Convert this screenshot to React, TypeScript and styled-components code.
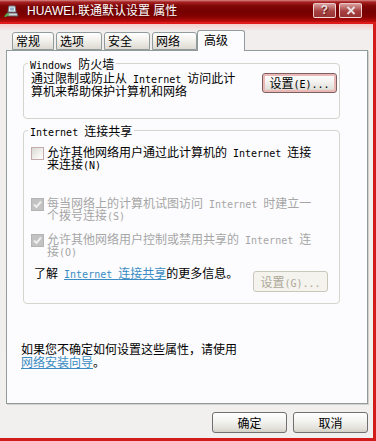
import React from 'react';
import styled, { createGlobalStyle } from 'styled-components';

const GlobalStyle = createGlobalStyle`
    html, body {
        margin: 0;
        padding: 0;
        background: #fff;
    }
    body {
        width: 376px;
        height: 441px;
        overflow: hidden;
    }
`;

const CJK = '"Noto Sans CJK SC", sans-serif';

const Window = styled.div`
    width: 376px;
    height: 441px;
    display: flex;
    flex-direction: column;
    overflow: hidden;
    font-family: ${CJK};
    font-size: 12px;
    color: #000;
`;

const TitleBar = styled.div`
    height: 22px;
    flex: none;
    display: flex;
    align-items: center;
    padding: 0 14px 0 4px;
    box-sizing: border-box;
    background: linear-gradient(
        to bottom,
        #d98a8a 0px,
        #a82222 2px,
        #7e0606 6px,
        #760000 12px,
        #860202 17px,
        #b40a0a 21px,
        #c81010 22px
    );
`;

const TitleText = styled.div`
    flex: 1;
    margin-left: 8px;
    color: #fff;
    font-family: 'Liberation Sans', 'Noto Sans CJK SC', sans-serif;
    font-size: 12px;
    line-height: 14px;
    white-space: nowrap;
    text-shadow: 1px 1px 0 rgba(60, 0, 0, 0.5);
`;

const CaptionButtons = styled.div`
    display: flex;
    gap: 3px;
    align-self: flex-start;
    margin-top: 3px;
`;

const CaptionButton = styled.div`
    width: 23px;
    height: 15px;
    box-sizing: border-box;
    border: 1px solid rgba(255, 235, 235, 0.8);
    border-radius: 2px;
    background: linear-gradient(to bottom, #d89c9c, #a84040 55%, #943434);
    display: flex;
    align-items: center;
    justify-content: center;
    color: #e6dede;
    font-family: 'Liberation Sans', sans-serif;
    font-weight: bold;
    font-size: 12px;
    line-height: 13px;
    text-shadow: 1px 1px 0 #6a2020;
`;

const Body = styled.div`
    flex: 1;
    display: flex;
    flex-direction: column;
    padding: 6px 5px 0 6px;
    border-top: 2px solid #de1a1a;
    border-right: 3px solid #d21c1c;
    border-bottom: 3px solid #d21c1c;
    background: linear-gradient(to bottom, #f6cccc 0px, #f1eeed 7px, #f1f0ef 100%);
`;

const TabStrip = styled.div`
    height: 20px;
    flex: none;
    display: flex;
    align-items: flex-end;
    gap: 2px;
    padding-left: 6px;
`;

const Tab = styled.div<{ $active?: boolean; $width: number }>`
    width: ${p => p.$width}px;
    height: ${p => (p.$active ? 21 : 18)}px;
    box-sizing: border-box;
    border: 1px solid #919b9c;
    border-bottom: ${p => (p.$active ? 'none' : '1px solid #919b9c')};
    border-radius: 3px 3px 0 0;
    padding-left: ${p => (p.$active ? 6 : 3)}px;
    font-size: 12px;
    line-height: ${p => (p.$active ? 18 : 16)}px;
    white-space: nowrap;
    position: relative;
    z-index: ${p => (p.$active ? 1 : 0)};
    margin: ${p => (p.$active ? '0 -2px -1px' : '0')};
    background: ${p =>
        p.$active ? '#fcfcfe' : 'linear-gradient(to bottom, #ffffff, #f2f1ec 45%, #dcdad2)'};
`;

const Panel = styled.div`
    height: 354px;
    flex: none;
    box-sizing: border-box;
    border: 1px solid #919b9c;
    background: #fcfcfe;
    box-shadow: 1px 1px 0 #d2d0c8;
    padding: 6px 27px 0 14px;
    display: flex;
    flex-direction: column;
`;

const GroupBox = styled.fieldset<{ $pad: string; $top?: number }>`
    margin: ${p => p.$top ?? 0}px 0 0 2px;
    padding: ${p => p.$pad};
    border: 1px solid #d6d4cc;
    border-radius: 4px;
    min-width: 0;
`;

const Legend = styled.legend`
    padding: 0 2px;
    margin-left: -3px;
    font-size: 12px;
    line-height: 13px;
    white-space: nowrap;
`;

// SimSun-style half-width latin run; zero line-height so it never grows the line box
const En = styled.span`
    font-family: 'DejaVu Sans Mono', 'Liberation Mono', monospace;
    font-size: 10px;
    line-height: 0;
`;

const FirewallRow = styled.div`
    display: flex;
    justify-content: space-between;
    align-items: flex-start;
`;

const Lines = styled.div<{ $lh: number; $muted?: boolean }>`
    line-height: ${p => p.$lh}px;
    white-space: nowrap;
    color: ${p => (p.$muted ? '#a6a6a6' : '#000')};
`;

const Button = styled.button<{ $variant?: 'plain' | 'focus' | 'disabled'; $h?: number; $mt?: number }>`
    width: 75px;
    height: ${p => p.$h ?? 21}px;
    margin-top: ${p => p.$mt ?? 0}px;
    flex: none;
    padding: 0;
    box-sizing: border-box;
    border-radius: 3px;
    font-family: ${CJK};
    font-size: 12px;
    line-height: 14px;
    cursor: default;
    border: 1px solid
        ${p => (p.$variant === 'disabled' ? '#c9c7ba' : p.$variant === 'focus' ? '#7c6060' : '#707070')};
    color: ${p => (p.$variant === 'disabled' ? '#aca899' : '#000')};
    background: ${p =>
        p.$variant === 'disabled'
            ? '#f4f3ee'
            : 'linear-gradient(to bottom, #ffffff, #f4f4f2 40%, #e4e2dc 80%, #d4d1c8)'};
    box-shadow: ${p => (p.$variant === 'focus' ? 'inset 0 0 0 2px #ebb8b8' : 'none')};
`;

const CheckRow = styled.label<{ $top: number }>`
    display: flex;
    align-items: flex-start;
    gap: 3px;
    margin-top: ${p => p.$top}px;
`;

const Box = styled.span<{ $checked?: boolean }>`
    width: 13px;
    height: 13px;
    margin-top: 1px;
    flex: none;
    box-sizing: border-box;
    display: flex;
    align-items: center;
    justify-content: center;
    border: 1px solid ${p => (p.$checked ? '#b4b4b4' : '#c4aaaa')};
    background: ${p =>
        p.$checked ? '#c2c2c2' : 'linear-gradient(135deg, #dad8d2, #f6f6f4 70%, #ffffff)'};
`;

const InfoRow = styled.div`
    display: flex;
    justify-content: space-between;
    align-items: flex-start;
    margin-top: 10px;
    padding-right: 9px;
`;

const InfoText = styled.div`
    margin-left: 3px;
    line-height: 12px;
    white-space: nowrap;
`;

const Link = styled.span`
    color: #3a8cc2;
    text-decoration: underline;
`;

const Note = styled.div`
    margin-top: 38px;
    line-height: 13px;
    white-space: nowrap;
`;

const Footer = styled.div`
    display: flex;
    justify-content: flex-end;
    gap: 6px;
    margin-top: 8px;
`;

const TitleIcon = () => (
    <svg width="15" height="14" viewBox="0 0 15 14">
        <path d="M5 2 L11 2 L12 8 L4 8 Z" fill="#eef2f4" stroke="#6a7480" strokeWidth="1" />
        <rect x="6" y="3.5" width="4" height="3" fill="#8fb0c8" />
        <path d="M3 9 L13 9 L14 12 L2 12 Z" fill="#d6d8d8" stroke="#5a5f66" strokeWidth="1" />
        <path d="M1 13 Q2 10 5 10.5" fill="none" stroke="#4caa3c" strokeWidth="1.6" />
    </svg>
);

const CheckMark = () => (
    <svg width="9" height="9" viewBox="0 0 9 9">
        <path d="M1 4.5 L3.5 7 L8 1.5" fill="none" stroke="#eeeeee" strokeWidth="2" />
    </svg>
);

const CloseGlyph = () => (
    <svg width="10" height="9" viewBox="0 0 10 9">
        <path d="M1.5 1 L8.5 8 M8.5 1 L1.5 8" stroke="#e8e0e0" strokeWidth="2" />
    </svg>
);

const tabs = [
    { label: '常规', width: 42 },
    { label: '选项', width: 46 },
    { label: '安全', width: 46 },
    { label: '网络', width: 45 },
    { label: '高级', width: 48, active: true }
];

const App = () => {
    return (
        <Window>
            <GlobalStyle />
            <TitleBar>
                <TitleIcon />
                <TitleText>HUAWEI.联通默认设置 属性</TitleText>
                <CaptionButtons>
                    <CaptionButton>?</CaptionButton>
                    <CaptionButton>
                        <CloseGlyph />
                    </CaptionButton>
                </CaptionButtons>
            </TitleBar>
            <Body>
                <TabStrip>
                    {tabs.map(t => (
                        <Tab key={t.label} $width={t.width} $active={t.active}>
                            {t.label}
                        </Tab>
                    ))}
                </TabStrip>
                <Panel>
                    <GroupBox $pad="1px 2px 21px 7px">
                        <Legend>
                            <En>Windows </En>防火墙
                        </Legend>
                        <FirewallRow>
                            <Lines $lh={13}>
                                通过限制或防止从<En> Internet </En>访问此计
                                <br />
                                算机来帮助保护计算机和网络
                            </Lines>
                            <Button $variant="focus" $h={20} $mt={2}>
                                设置<En>(E)...</En>
                            </Button>
                        </FirewallRow>
                    </GroupBox>
                    <GroupBox $pad="0 2px 11px 7px" $top={5}>
                        <Legend>
                            <En>Internet </En>连接共享
                        </Legend>
                        <CheckRow $top={9}>
                            <Box />
                            <Lines $lh={12}>
                                允许其他网络用户通过此计算机的<En> Internet </En>连接
                                <br />
                                来连接<En>(N)</En>
                            </Lines>
                        </CheckRow>
                        <CheckRow $top={27}>
                            <Box $checked>
                                <CheckMark />
                            </Box>
                            <Lines $lh={12} $muted>
                                每当网络上的计算机试图访问<En> Internet </En>时建立一
                                <br />
                                个拨号连接<En>(S)</En>
                            </Lines>
                        </CheckRow>
                        <CheckRow $top={12}>
                            <Box $checked>
                                <CheckMark />
                            </Box>
                            <Lines $lh={12} $muted>
                                允许其他网络用户控制或禁用共享的<En> Internet </En>连
                                <br />
                                接<En>(O)</En>
                            </Lines>
                        </CheckRow>
                        <InfoRow>
                            <InfoText>
                                了解<En> </En>
                                <Link>
                                    <En>Internet </En>连接共享
                                </Link>
                                的更多信息。
                            </InfoText>
                            <Button $variant="disabled" $mt={4}>
                                设置<En>(G)...</En>
                            </Button>
                        </InfoRow>
                    </GroupBox>
                    <Note>
                        如果您不确定如何设置这些属性，请使用
                        <br />
                        <Link>网络安装向导</Link>。
                    </Note>
                </Panel>
                <Footer>
                    <Button>确定</Button>
                    <Button>取消</Button>
                </Footer>
            </Body>
        </Window>
    );
};

export default App;
